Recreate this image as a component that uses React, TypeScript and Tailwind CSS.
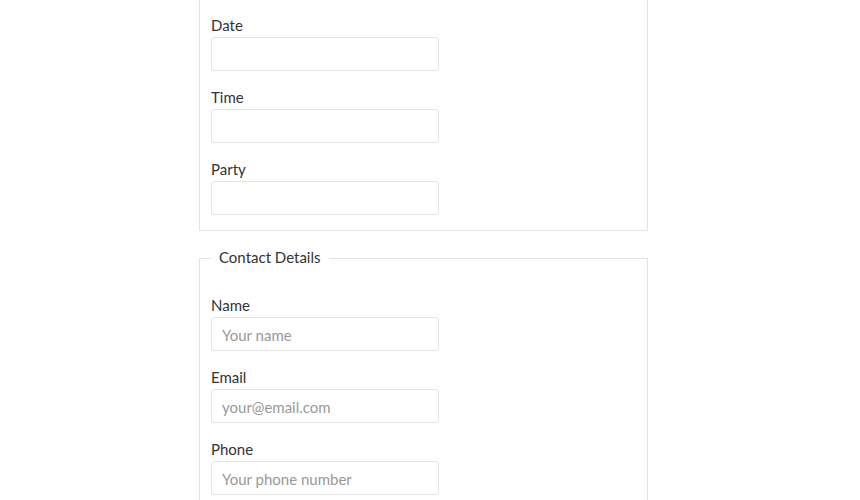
import React from "react";

const font = { fontFamily: "Lato, 'Open Sans', sans-serif" };

function Field({ label, placeholder }: { label: string; placeholder?: string }) {
  return (
    <div className="flex flex-col">
      <label className="mb-[2px] block text-[15px] leading-[20px] text-[#333333]">{label}</label>
      <input
        type="text"
        placeholder={placeholder}
        className="h-[34px] w-[228px] rounded-[3px] border border-[#e3e3e3] bg-white px-[10px] pt-[2px] pb-0 text-[15px] text-[#333333] outline-none placeholder:text-[#999999]"
      />
    </div>
  );
}

export default function App() {
  return (
    <div className="min-h-[500px] w-full overflow-hidden bg-white pl-[199px]" style={font}>
      <form className="w-[449px]">
        <fieldset className="-mt-[11px] border border-[#e3e3e3] px-[11px] pb-[15px] pt-[25px]">
          <div className="flex flex-col gap-4">
            <Field label="Date" />
            <Field label="Time" />
            <Field label="Party" />
          </div>
        </fieldset>
        <fieldset className="mt-[16px] border border-[#e3e3e3] px-[11px] pb-[15px] pt-[25px]">
          <legend className="px-2 pb-[2px] text-[15px] leading-[21px] text-[#333333]">Contact Details</legend>
          <div className="flex flex-col gap-4">
            <Field label="Name" placeholder="Your name" />
            <Field label="Email" placeholder="your@email.com" />
            <Field label="Phone" placeholder="Your phone number" />
          </div>
        </fieldset>
      </form>
    </div>
  );
}
